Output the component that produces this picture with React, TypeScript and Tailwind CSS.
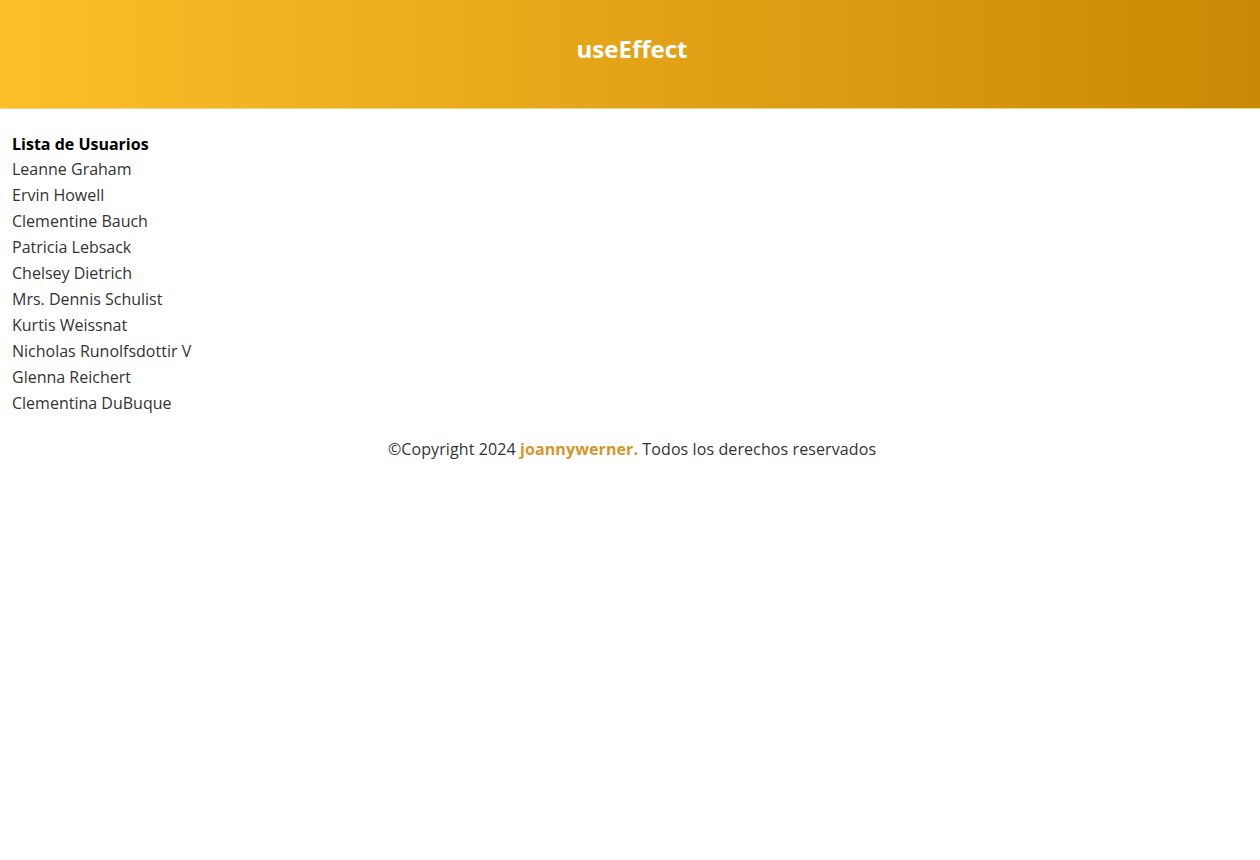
const usuarios = [
  'Leanne Graham',
  'Ervin Howell',
  'Clementine Bauch',
  'Patricia Lebsack',
  'Chelsey Dietrich',
  'Mrs. Dennis Schulist',
  'Kurtis Weissnat',
  'Nicholas Runolfsdottir V',
  'Glenna Reichert',
  'Clementina DuBuque',
];

export default function App() {
  return (
    <div className="min-h-screen bg-white font-['Open_Sans',sans-serif] text-[16px]">
      <header className="h-[109px] flex items-center justify-center bg-gradient-to-r from-[#fcbf27] to-[#ca8904] border-b border-[#f2d37e] pb-[10px] pl-1">
        <h1 className="text-[24px] font-bold text-white">useEffect</h1>
      </header>
      <main className="px-3 pt-[23px]">
        <h2 className="font-bold text-black leading-[24px]">Lista de Usuarios</h2>
        <ul>
          {usuarios.map((u) => (
            <li key={u} className="leading-[26px] text-[#333]">{u}</li>
          ))}
        </ul>
      </main>
      <footer className="pt-[20px] pl-1 text-center text-[#333] leading-[26px] tracking-[0.1px]">
        ©Copyright 2024 <span className="font-bold text-[#d4962b]">joannywerner.</span> Todos los derechos reservados
      </footer>
    </div>
  );
}
